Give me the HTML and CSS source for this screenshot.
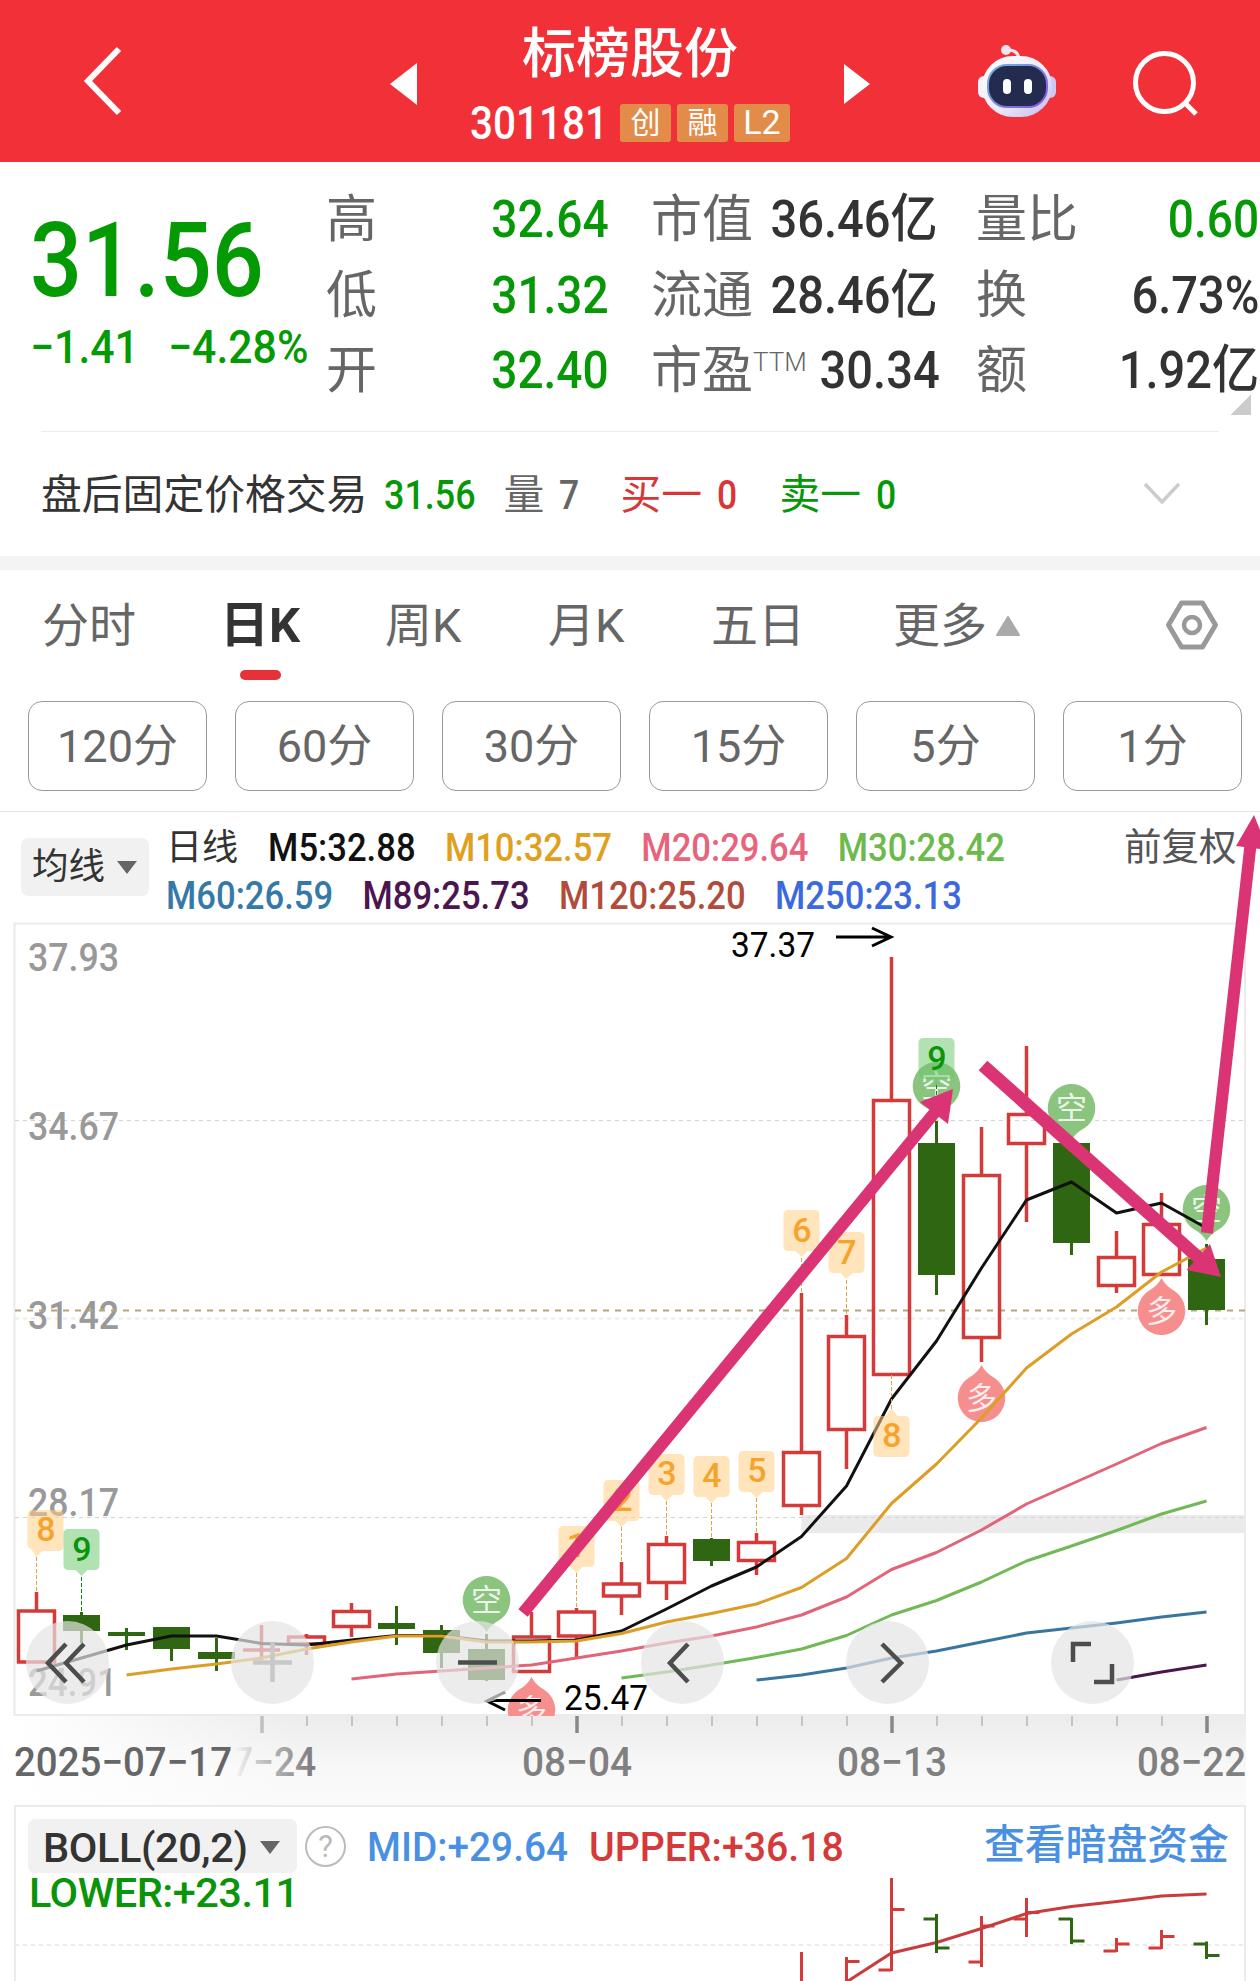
FILE: index.html
```html
<!DOCTYPE html>
<html lang="zh-CN">
<head>
  <meta charset="UTF-8">
  <meta name="viewport" content="width=device-width, initial-scale=1">
  <title>标榜股份 301181</title>
  <link rel="stylesheet" href="styles.css">
</head>
<body>

<div class="header">
  <svg class="back" width="42" height="72" viewBox="0 0 42 72"><path d="M36 3 L5 35 L36 67" fill="none" stroke="#fff" stroke-width="6"/></svg>
  <svg class="prev" width="27" height="42" viewBox="0 0 27 42"><path d="M27 0 V42 L0 21Z" fill="#fff"/></svg>
  <div class="stock">
    <h1>标榜股份</h1>
    <div class="code">
      <span class="num">301181</span>
      <span class="badge">创</span>
      <span class="badge">融</span>
      <span class="badge l2">L2</span>
    </div>
  </div>
  <svg class="next" width="26" height="40" viewBox="0 0 26 40"><path d="M0 0 V40 L26 20Z" fill="#fff"/></svg>
  <svg class="robot" width="78" height="74" viewBox="0 0 78 74">
    <defs>
      <linearGradient id="shell" x1="0" y1="0" x2="1" y2="1">
        <stop offset="0" stop-color="#fff"/>
        <stop offset=".55" stop-color="#eeeafa"/>
        <stop offset="1" stop-color="#bfb9ea"/>
      </linearGradient>
      <linearGradient id="rim" x1="0" y1="0" x2="1" y2="1">
        <stop offset="0" stop-color="#6fb7dd"/>
        <stop offset="1" stop-color="#8a4fe0"/>
      </linearGradient>
    </defs>
    <path d="M28 5 Q40 4 41 14" fill="none" stroke="#ece4f6" stroke-width="3"/>
    <circle cx="28" cy="5" r="5" fill="#f3e6f4"/>
    <rect x="0" y="31" width="12" height="22" rx="6" fill="#f4f2fc"/>
    <rect x="66" y="31" width="12" height="22" rx="6" fill="#cdc8f0"/>
    <rect x="4" y="11" width="70" height="61" rx="31" fill="url(#shell)"/>
    <rect x="10" y="20" width="59" height="42" rx="19" fill="#232b4e" stroke="url(#rim)" stroke-width="2"/>
    <rect x="25" y="34" width="8" height="15" rx="4" fill="#fff"/>
    <rect x="46" y="34" width="8" height="15" rx="4" fill="#fff"/>
  </svg>
  <svg class="search" width="66" height="66" viewBox="0 0 66 66"><circle cx="31.500" cy="31.500" r="29" fill="none" stroke="#fff" stroke-width="5"/><path d="M51 51 L63 63" stroke="#fff" stroke-width="5"/></svg>
</div>

<div class="quote">
  <div class="price">
    <div class="num last">31.56</div>
    <div class="change"><span class="num">−1.41</span><span class="num">−4.28%</span></div>
  </div>
  <div class="pairs day">
    <div class="pair"><span>高</span><b class="num green">32.64</b></div>
    <div class="pair"><span>低</span><b class="num green">31.32</b></div>
    <div class="pair"><span>开</span><b class="num green">32.40</b></div>
  </div>
  <div class="pairs cap">
    <div class="pair"><span>市值</span><b class="num">36.46亿</b></div>
    <div class="pair"><span>流通</span><b class="num">28.46亿</b></div>
    <div class="pair"><span>市盈<sup>TTM</sup></span><b class="num">30.34</b></div>
  </div>
  <div class="pairs vol">
    <div class="pair"><span>量比</span><b class="num green">0.60</b></div>
    <div class="pair"><span>换</span><b class="num">6.73%</b></div>
    <div class="pair"><span>额</span><b class="num">1.92亿</b></div>
  </div>
  <i class="corner"></i>
</div>

<div class="after">
  <span>盘后固定价格交易</span>
  <b class="num green after-price">31.56</b>
  <span class="gray after-vol">量 <b class="num">7</b></span>
  <span class="red after-buy">买一 <b class="num">0</b></span>
  <span class="green after-sell">卖一 <b class="num">0</b></span>
  <svg width="38" height="24" viewBox="0 0 38 24"><path d="M2 2 L19 20 L36 2" fill="none" stroke="#ccc" stroke-width="3.500"/></svg>
</div>

<div class="tabs">
  <span class="tab">分时</span>
  <span class="tab active">日K</span>
  <span class="tab">周K</span>
  <span class="tab">月K</span>
  <span class="tab">五日</span>
  <span class="tab more">更多<svg width="24" height="20" viewBox="0 0 24 20"><path d="M12 1 L23 19 H1Z" fill="#aaa" stroke="#aaa" stroke-width="2" stroke-linejoin="round"/></svg></span>
  <svg class="setting" width="52" height="50" viewBox="0 0 52 50"><path d="M15.500 3 H36.500 L49.500 25 L36.500 47 H15.500 L2.500 25Z" fill="none" stroke="#999" stroke-width="5" stroke-linejoin="round"/><circle cx="26" cy="25" r="8" fill="none" stroke="#999" stroke-width="4.500"/></svg>
</div>

<div class="minutes">
  <button>120分</button>
  <button>60分</button>
  <button>30分</button>
  <button>15分</button>
  <button>5分</button>
  <button>1分</button>
</div>

<div class="legend">
  <div class="select">均线<i class="caret"></i></div>
  <div class="ma">
    <div class="ma-row">
      <span class="ma-name">日线</span>
      <span class="m5">M5:32.88</span>
      <span class="m10">M10:32.57</span>
      <span class="m20">M20:29.64</span>
      <span class="m30">M30:28.42</span>
    </div>
    <div class="ma-row">
      <span class="m60">M60:26.59</span>
      <span class="m89">M89:25.73</span>
      <span class="m120">M120:25.20</span>
      <span class="m250">M250:23.13</span>
    </div>
  </div>
  <div class="adjust">前复权</div>
</div>

<div class="chart">
  <svg class="kline" width="1260" height="794" viewBox="0 922 1260 794">
    <defs>
      <clipPath id="plot"><rect x="14" y="922" width="1232" height="794"/></clipPath>
      <path id="tag" d="M-13 0 H13 Q18 0 18 5 V36 Q18 41 13 41 H6 L0 47 L-6 41 H-13 Q-18 41 -18 36 V5 Q-18 0 -13 0Z"/>
      <path id="tag-up" d="M-13 7 H-6 L0 0 L6 7 H13 Q18 7 18 12 V43 Q18 48 13 48 H-13 Q-18 48 -18 43 V12 Q-18 7 -13 7Z"/>
      <path id="pin" d="M0 -24 A24 24 0 0 1 13 20 Q4 25 0 32 Q-4 25 -13 20 A24 24 0 0 1 0 -24Z"/>
      <path id="pin-up" d="M0 24 A24 24 0 0 0 13 -20 Q4 -25 0 -33 Q-4 -25 -13 -20 A24 24 0 0 0 0 24Z"/>
    </defs>

    <!-- frame and grid -->
    <rect x="801.500" y="1515" width="444" height="18" fill="#eaeaea"/>
    <rect x="14.500" y="923.500" width="1230.500" height="791.500" fill="none" stroke="#ebebeb" stroke-width="2"/>
    <g class="grid">
      <path d="M15 1120.500 H1245"/>
      <path class="soft" d="M15 1318.500 H1245"/>
      <path d="M15 1517.500 H1245"/>
    </g>
    <g class="scale">
      <text x="28" y="971" textLength="91" lengthAdjust="spacingAndGlyphs">37.93</text>
      <text x="28" y="1140" textLength="91" lengthAdjust="spacingAndGlyphs">34.67</text>
      <text x="28" y="1329" textLength="91" lengthAdjust="spacingAndGlyphs">31.42</text>
      <text x="28" y="1516" textLength="91" lengthAdjust="spacingAndGlyphs">28.17</text>
      <text x="28" y="1696" textLength="89" lengthAdjust="spacingAndGlyphs">24.91</text>
    </g>
    <path d="M15 1310.500 H1245" stroke="#b5a57b" stroke-width="2" stroke-dasharray="6 6"/>

    <!-- candles -->
    <g class="up">
      <path d="M36.500 1592 V1611 M18.500 1611 h36 v51 h-36Z"/>
      <path d="M261.500 1625 V1660 M243 1650 h37"/>
      <path d="M306.500 1634 V1637 M306.500 1644 V1655 M288.500 1637 h36 v7 h-36Z"/>
      <path d="M351.500 1603 V1611 M351.500 1627 V1637 M333.500 1611.500 h36 v15 h-36Z"/>
      <path d="M531.500 1612 V1637 M513.500 1637 h36 v34.500 h-36Z"/>
      <path d="M576.500 1608 V1612 M576.500 1636 V1658 M558.500 1612 h36 v24 h-36Z"/>
      <path d="M621.500 1562 V1584 M621.500 1596 V1615 M603.500 1584 h36 v12 h-36Z"/>
      <path d="M666.500 1536 V1545 M666.500 1583 V1600 M648.500 1544.500 h36 v38 h-36Z"/>
      <path d="M756.500 1533 V1543 M756.500 1561 V1575 M738.500 1542.500 h36 v18 h-36Z"/>
      <path d="M801.500 1293 V1452 M801.500 1506 V1515 M783.500 1452.500 h36 v53 h-36Z"/>
      <path d="M846.500 1315 V1336 M846.500 1430 V1469 M828.500 1336.500 h36 v93 h-36Z"/>
      <path d="M891.500 957 V1100 M873.500 1100.500 h36 v274 h-36Z"/>
      <path d="M981.500 1127 V1175 M981.500 1338 V1362 M963.500 1175.500 h36 v162 h-36Z"/>
      <path d="M1026.500 1046 V1114 M1026.500 1144 V1222 M1008.500 1114.500 h36 v29 h-36Z"/>
      <path d="M1116.500 1231 V1257 M1116.500 1286 V1293 M1098.500 1257.500 h36 v28 h-36Z"/>
      <path d="M1161.500 1193 V1224 M1143.500 1224.500 h36 v50 h-36Z"/>
    </g>
    <g class="down">
      <path d="M81.500 1612 V1643"/><rect x="63" y="1615" width="37" height="16"/>
      <path d="M126.500 1628 V1650"/><rect x="108" y="1632" width="37" height="4"/>
      <path d="M171.500 1630 V1661"/><rect x="153" y="1627" width="37" height="22"/>
      <path d="M216.500 1638 V1671"/><rect x="198" y="1652" width="37" height="7"/>
      <path d="M396.500 1606 V1645"/><rect x="378" y="1623" width="37" height="6"/>
      <path d="M441.500 1625 V1668"/><rect x="423" y="1630" width="37" height="23"/>
      <path d="M486.500 1634 V1681"/><rect x="468" y="1649" width="37" height="31"/>
      <path d="M711.500 1538 V1566"/><rect x="693" y="1539" width="37" height="22"/>
      <path d="M936.500 1121 V1295"/><rect x="918" y="1143" width="37" height="132"/>
      <path d="M1071.500 1143 V1255"/><rect x="1053" y="1143" width="37" height="100"/>
      <path d="M1206.500 1244 V1325"/><rect x="1188" y="1259" width="37" height="51"/>
    </g>

    <!-- long / short signals -->
    <g class="pin-short">
      <use href="#pin" x="486.500" y="1600"/><text x="486.500" y="1611">空</text>
      <use href="#pin" x="936.500" y="1086"/><text x="936.500" y="1097">空</text>
      <use href="#pin" x="1071.500" y="1108"/><text x="1071.500" y="1119">空</text>
      <use href="#pin" x="1206.500" y="1209"/><text x="1206.500" y="1220">空</text>
    </g>
    <g class="pin-long" clip-path="url(#plot)">
      <use href="#pin-up" x="531.500" y="1710"/><text x="531.500" y="1721">多</text>
      <use href="#pin-up" x="981.500" y="1398"/><text x="981.500" y="1409">多</text>
      <use href="#pin-up" x="1161.500" y="1311"/><text x="1161.500" y="1322">多</text>
    </g>

    <!-- moving averages -->
    <g class="lines">
      <polyline stroke="#111" points="36.500,1671 81.500,1658 126.500,1645 171.500,1636 216.500,1636 261.500,1643.500 306.500,1645 351.500,1640 396.500,1635.500 441.500,1635.500 486.500,1641 531.500,1641 576.500,1640 621.500,1631 666.500,1609 711.500,1586 756.500,1567 801.500,1536.500 846.500,1486 891.500,1399 936.500,1341 981.500,1268 1026.500,1200 1071.500,1182 1116.500,1213 1161.500,1203 1206.500,1228"/>
      <polyline stroke="#dc9e26" points="126.500,1675 171.500,1669 216.500,1664 261.500,1658 306.500,1649 351.500,1642 396.500,1636 441.500,1636 486.500,1642 531.500,1642 576.500,1641 621.500,1633.500 666.500,1622 711.500,1613.500 756.500,1604 801.500,1587.500 846.500,1558.500 891.500,1503.500 936.500,1464 981.500,1418 1026.500,1368 1071.500,1334 1116.500,1307 1161.500,1272 1206.500,1248"/>
      <polyline stroke="#e26478" points="351.500,1679 396.500,1674 441.500,1671 486.500,1668 531.500,1665 576.500,1658 621.500,1651 666.500,1643 711.500,1636 756.500,1627 801.500,1615 846.500,1597 891.500,1569.500 936.500,1552.500 981.500,1530 1026.500,1504 1071.500,1484 1116.500,1464 1161.500,1443.500 1206.500,1427.500"/>
      <polyline stroke="#72b856" points="621.500,1678 666.500,1672 711.500,1665 756.500,1657.500 801.500,1649 846.500,1635.500 891.500,1615 936.500,1600.500 981.500,1582 1026.500,1561 1071.500,1546 1116.500,1530.500 1161.500,1514 1206.500,1501"/>
      <polyline stroke="#3a75a0" points="756.500,1680 801.500,1675 846.500,1668 891.500,1658 936.500,1651 981.500,1642 1026.500,1633 1071.500,1628 1116.500,1623 1161.500,1617 1206.500,1612"/>
      <polyline stroke="#4b1550" points="1116.500,1680 1161.500,1672 1206.500,1665"/>
    </g>

    <!-- nine-turn counters -->
    <g class="tag-links">
      <path d="M36.500 1557 V1592 M576.500 1573 V1608 M621.500 1527 V1562 M666.500 1501 V1536 M711.500 1503 V1538 M756.500 1498 V1533 M801.500 1258 V1293 M846.500 1280 V1315 M891.500 1375 V1409" stroke="#d9a83e"/>
      <path d="M81.500 1577 V1612 M936.500 1085 V1121" stroke="#14801c"/>
    </g>
    <g class="tag-orange">
      <path d="M32.500 1510 H58.500 Q63.500 1510 63.500 1515 V1546 Q63.500 1551 58.500 1551 H42 L36.500 1557 L31 1549 Q27.500 1548 27.500 1544 V1515 Q27.500 1510 32.500 1510Z"/><text x="46" y="1541">8</text>
      <use href="#tag" x="576.500" y="1526"/><text x="576.500" y="1557">1</text>
      <use href="#tag" x="621.500" y="1480"/><text x="623" y="1511">2</text>
      <use href="#tag" x="666.500" y="1454"/><text x="667" y="1485">3</text>
      <use href="#tag" x="711.500" y="1456"/><text x="712" y="1487">4</text>
      <use href="#tag" x="756.500" y="1451"/><text x="757" y="1482">5</text>
      <use href="#tag" x="801.500" y="1210"/><text x="802" y="1242">6</text>
      <use href="#tag" x="846.500" y="1232"/><text x="847" y="1264">7</text>
      <use href="#tag-up" x="891.500" y="1409"/><text x="892" y="1447">8</text>
    </g>
    <g class="tag-green">
      <use href="#tag" x="81.500" y="1529"/><text x="82" y="1561">9</text>
      <use href="#tag" x="936.500" y="1038"/><text x="937" y="1070">9</text>
    </g>

    <!-- highest and lowest price -->
    <g class="extreme">
      <text x="731" y="957" textLength="84" lengthAdjust="spacingAndGlyphs">37.37</text>
      <path d="M836 937 H890 M872 928 L891 937 L872 946"/>
      <text x="564" y="1710" textLength="84" lengthAdjust="spacingAndGlyphs">25.47</text>
      <path d="M541 1700.500 H488 M505 1692 L487 1701 L505 1710"/>
    </g>
  </svg>

  <div class="tools">
    <button><svg width="83" height="83" viewBox="0 0 83 83"><path d="M40 23 L22 42 L40 61 M58 23 L40 42 L58 61"/></svg></button>
    <button class="disabled"><svg width="83" height="83" viewBox="0 0 83 83"><path d="M22 41.500 H61 M41.500 22 V61"/></svg></button>
    <button><svg width="83" height="83" viewBox="0 0 83 83"><path d="M22 41.500 H61"/></svg></button>
    <button><svg width="83" height="83" viewBox="0 0 83 83"><path d="M47 23 L29 42 L47 61"/></svg></button>
    <button><svg width="83" height="83" viewBox="0 0 83 83"><path d="M36 23 L55 42 L36 61"/></svg></button>
    <button><svg width="83" height="83" viewBox="0 0 83 83"><path d="M40 23 H22 V41 M61 43 V61 H43"/></svg></button>
  </div>

  <!-- hand drawn trend arrows -->
  <svg class="trend" width="1260" height="794" viewBox="0 922 1260 794">
    <path d="M523 1613 L936 1111" stroke-width="12"/>
    <path class="head" d="M953 1089 L920 1102 L948 1124Z"/>
    <path d="M983 1065.500 L1200 1259" stroke-width="13"/>
    <path class="head" d="M1221 1277 L1186.500 1270 L1210 1244Z"/>
    <path d="M1207 1233 L1250.500 845" stroke-width="12"/>
    <path class="head" d="M1254 815 L1236 846 L1268 850Z"/>
  </svg>
</div>

<div class="axis">
  <svg width="1260" height="89" viewBox="0 1716 1260 89">
    <defs>
      <linearGradient id="fade" x1="230" x2="315" y1="0" y2="0" gradientUnits="userSpaceOnUse">
        <stop offset="0" stop-color="#fff"/>
        <stop offset=".3" stop-color="#ccc"/>
        <stop offset="1" stop-color="#7a7a7a"/>
      </linearGradient>
    </defs>
    <path stroke="#c4c4c4" stroke-width="2" d="M307 1716 v10 M352 1716 v10 M397 1716 v10 M442 1716 v10 M487 1716 v10 M532 1716 v10 M622 1716 v10 M667 1716 v10 M712 1716 v10 M757 1716 v10 M802 1716 v10 M847 1716 v10 M937 1716 v10 M982 1716 v10 M1027 1716 v10 M1072 1716 v10 M1117 1716 v10 M1162 1716 v10"/>
    <path stroke="#c0c0c0" stroke-width="3.500" d="M262 1716 v17"/>
    <path stroke="#888" stroke-width="3.500" d="M577 1716 v17 M892 1716 v17 M1207 1716 v17"/>
    <g class="dates">
      <text x="14" y="1775.500" textLength="218" lengthAdjust="spacingAndGlyphs" fill="#666">2025−07−17</text>
      <text x="232" y="1775.500" textLength="84" lengthAdjust="spacingAndGlyphs" fill="url(#fade)">7−24</text>
      <text x="522" y="1775.500" textLength="110" lengthAdjust="spacingAndGlyphs">08−04</text>
      <text x="837" y="1775.500" textLength="110" lengthAdjust="spacingAndGlyphs">08−13</text>
      <text x="1137" y="1775.500" textLength="109" lengthAdjust="spacingAndGlyphs">08−22</text>
    </g>
  </svg>
</div>

<div class="boll">
  <div class="boll-head">
    <div class="select">BOLL(20,2)<i class="caret"></i></div>
    <span class="help">?</span>
    <span class="mid"><span class="num">MID:+29.64</span></span>
    <span class="upper"><span class="num">UPPER:+36.18</span></span>
    <span class="link">查看暗盘资金</span>
  </div>
  <div class="lower">LOWER:+23.11</div>
  <svg class="boll-chart" width="1232" height="175" viewBox="14 1806 1232 175">
    <path d="M15 1945 H1245" stroke="#ebebeb" stroke-width="2" stroke-dasharray="4 4"/>
    <g fill="none" stroke="#d53a3a" stroke-width="3">
      <path d="M801.500 1952 V1981"/>
      <path d="M846.500 1957 V1981 M846.500 1961.500 h13"/>
      <path d="M891.500 1878 V1971 M891.500 1909.500 h13 M891.500 1970 h-13"/>
      <path d="M981.500 1916 V1967 M981.500 1926 h13 M981.500 1962 h-13"/>
      <path d="M1026.500 1898 V1937 M1026.500 1912.500 h13 M1026.500 1919 h-13"/>
      <path d="M1116.500 1938 V1952 M1116.500 1944 h13 M1116.500 1951 h-13"/>
      <path d="M1161.500 1930 V1949 M1161.500 1936.500 h13 M1161.500 1948 h-13"/>
      <polyline stroke="#c93c3c" points="846.500,1982 891.500,1953 936.500,1942.500 981.500,1928.500 1026.500,1913.500 1071.500,1906.500 1116.500,1901.500 1161.500,1896 1206.500,1894"/>
    </g>
    <g fill="none" stroke="#2f6611" stroke-width="3">
      <path d="M936.500 1914 V1953 M936.500 1919 h-13 M936.500 1948 h13"/>
      <path d="M1071.500 1918 V1944 M1071.500 1919 h-13 M1071.500 1941 h13"/>
      <path d="M1206.500 1941.500 V1959 M1206.500 1944 h-13 M1206.500 1955.500 h13"/>
    </g>
  </svg>
</div>

</body>
</html>
```
FILE: styles.css
```css
* { margin: 0; padding: 0; box-sizing: border-box; }
body { width: 1260px; height: 1981px; overflow: hidden; background: #fff; color: #333; font-family: Roboto, 'Noto Sans CJK SC', sans-serif; }
svg { display: block; flex: none; }
i { display: block; }

/* narrow figures */
.num { display: inline-block; font-weight: 500; transform: scaleX(.9); transform-origin: left; }
.green { color: #069806; }
.red { color: #d93636; }
.gray { color: #666; }

/* Header */
.header { height: 162px; background: #f13038; display: flex; align-items: flex-start; color: #fff; }
.back { margin: 46px 0 0 83px; }
.prev { margin: 63px 0 0 265px; }
.stock { width: 426px; display: flex; flex-direction: column; align-items: center; }
.stock h1 { margin-top: 18px; font-size: 54px; line-height: 74px; font-weight: 500; }
.code { display: flex; align-items: center; gap: 6px; height: 38px; margin-top: 12px; line-height: 38px; }
.code .num { width: 144px; font-size: 46px; transform: scaleX(.88); }
.badge { width: 51px; height: 38px; border-radius: 3px; background: #e38c4a; text-align: center; font-size: 30px; line-height: 37px; }
.badge.l2 { width: 56px; font-size: 34px; }
.next { margin: 64px 0 0 1px; }
.robot { margin: 45px 0 0 108px; }
.search { margin: 51px 0 0 77px; }

/* Quote */
.quote { position: relative; height: 269px; display: flex; padding-top: 20px; }
.price { width: 326px; padding-left: 30px; color: #049a04; }
.last { display: block; font-size: 103px; line-height: 120px; margin-top: 19px; transform: scaleX(.89); }
.change { display: flex; font-size: 46px; line-height: 54px; margin-top: -1px; gap: 21px; white-space: nowrap; }
.change .num { transform: scaleX(.93); }
.pairs { width: 283px; }
.pair { display: flex; justify-content: space-between; height: 75.5px; line-height: 75.5px; font-size: 51px; color: #666; white-space: nowrap; }
.pair b { font-size: 52px; transform: scaleX(.905); transform-origin: right; color: #333; }
.pair b.green { color: #069806; transform: scaleX(.885); }
.pair sup { font-size: 26px; font-weight: 300; line-height: 1; vertical-align: 17px; }
.cap { margin-left: 42px; width: 279px; }
.vol { margin-left: 46px; }
.corner { position: absolute; right: 9px; bottom: 16px; width: 20px; height: 20px; background: linear-gradient(135deg, transparent 50%, #ccc 50%); }

.after { margin: 0 41px; height: 125px; border-top: 1px solid #ebebeb; display: flex; align-items: baseline; font-size: 40.8px; line-height: 127px; white-space: nowrap; }
.after .num { margin-left: 5px; transform: scaleX(.87); }
.after .after-price { margin-left: 17px; width: 119px; transform: scaleX(.88); }
.after-vol { width: 117px; }
.after-buy { width: 159px; }
.after-sell { width: 364px; }
.after svg { align-self: center; }

/* Period tabs */
.tabs { height: 145px; border-top: 14px solid #f4f4f4; padding: 0 42px; display: flex; color: #666; font-size: 47px; line-height: 112px; white-space: nowrap; }
.tab { width: 163px; }
.tab:first-child { width: 178px; }
.tab.active { position: relative; width: 165px; color: #333; font-size: 49px; font-weight: 700; }
.tab.active::after { content: ''; position: absolute; left: 20px; top: 100px; width: 41px; height: 10px; border-radius: 5px; background: #e63236; }
.tab.more { width: 273px; margin-left: 19px; display: flex; align-items: center; height: 112px; gap: 9px; }
.setting { margin-top: 30px; }

.minutes { height: 111px; padding-left: 28px; display: flex; gap: 28px; border-bottom: 1px solid #e6e6e6; }
.minutes button { width: 179px; height: 90px; padding-top: 2px; border: 1.5px solid #999; border-radius: 14px; background: #fff; font: 45px/84px Roboto, 'Noto Sans CJK SC', sans-serif; color: #666; }

/* Moving average legend */
.legend { height: 110px; display: flex; padding-left: 21px; white-space: nowrap; }
.select { display: flex; align-items: center; border-radius: 7px; background: #f1f1f1; }
.caret { border: solid transparent; border-width: 13px 10px 0; border-top-color: #666; }
.legend .select { margin-top: 26px; width: 128px; height: 58px; padding-left: 11px; gap: 12px; font-size: 36.500px; line-height: 54px; }
.ma { margin-left: 17px; padding-top: 12px; width: 958px; }
.ma-row { display: flex; gap: 33px; height: 48px; line-height: 48px; font-size: 39px; font-weight: 500; transform: scaleX(.888); transform-origin: left; }
.ma-name { width: 82px; font-size: 36px; font-weight: 400; transform: scaleX(1.13); transform-origin: left; }
.m5 { color: #111; }
.m10 { color: #e0a01e; }
.m20 { color: #e8637c; }
.m30 { color: #6cba4c; }
.m60 { color: #3579a8; }
.m89 { color: #4b1550; }
.m120 { color: #b04c3c; }
.m250 { color: #3d69e0; }
.adjust { padding-top: 11px; font-size: 37.500px; line-height: 48px; color: #555; }

/* K line chart */
.chart { position: relative; height: 794px; }
.grid path { stroke: #d4d4d4; stroke-width: 1; stroke-dasharray: 4 4; }
.grid .soft { stroke: #ececec; stroke-width: 2; }
.scale { font: 500 39px Roboto; fill: #999; }
.up { fill: none; stroke: #d53a3a; stroke-width: 3.5; }
.down { fill: #2f6611; stroke: none; }
.down path { stroke: #2f6611; stroke-width: 3; }
.pin-short { fill: #8bc47f; }
.pin-long { fill: #f68e8e; }
.pin-short text, .pin-long text { fill: #fff; fill-opacity: .85; font: 31px 'Noto Sans CJK SC'; text-anchor: middle; }
.lines { fill: none; stroke-width: 3; stroke-linejoin: round; }
.tag-links { fill: none; stroke-width: 1; stroke-dasharray: 4 2; }
.tag-orange, .tag-green { font: 500 34px Roboto; text-anchor: middle; }
.tag-orange { fill: rgba(255, 205, 133, .55); }
.tag-orange text { fill: #f6a32c; }
.tag-green { fill: rgba(110, 198, 110, .53); }
.tag-green text { fill: #0a940a; }
.extreme { font: 35px Roboto; fill: #000; }
.extreme path { fill: none; stroke: #000; stroke-width: 3; }

.tools { position: absolute; left: 26px; top: 699px; display: flex; gap: 122px; }
.tools button { width: 83px; height: 83px; border: none; border-radius: 50%; background: rgba(228, 228, 228, .7); }
.tools path { fill: none; stroke: #4d4d4d; stroke-width: 4.500; }
.tools .disabled path { stroke: #c8c8c8; }

.trend { position: absolute; left: 0; top: 0; overflow: visible; fill: none; stroke: #da3474; pointer-events: none; }
.trend .head { fill: #da3474; stroke: none; }

.axis { height: 89px; background: linear-gradient(90deg, #fff 14px, rgba(255, 255, 255, 0) 300px), linear-gradient(#ececec, #f8f8f8 60%, #fafafa); border-right: 14px solid #fff; }
.dates { font: 500 40.500px Roboto; fill: #808080; }

/* BOLL panel */
.boll { position: relative; margin: 0 14px; height: 176px; border: 2px solid #ebebeb; border-bottom: none; overflow: hidden; }
.boll-head { display: flex; align-items: center; padding: 12px 0 0 12px; height: 66px; font-size: 41.500px; white-space: nowrap; }
.boll-head .select { width: 269px; height: 54px; padding: 2px 17px 0 15px; justify-content: space-between; font-weight: 500; letter-spacing: -.4px; }
.boll-head .num { padding-top: 1px; transform: scaleX(.935); }
.boll-head .upper .num { transform: scaleX(.945); }
.help { width: 41px; height: 41px; margin: 0 21px 0 8px; border: 2.500px solid #bbb; border-radius: 50%; color: #bbb; font-size: 31px; line-height: 37px; text-align: center; }
.mid { width: 222px; color: #4a90e2; }
.upper { width: 395px; color: #d53a3a; }
.link { color: #4a90e2; font-size: 40.800px; font-weight: 500; line-height: 50px; margin-top: -3px; }
.lower { margin-top: -4px; padding-left: 13px; font-size: 41.500px; font-weight: 500; line-height: 48px; letter-spacing: -.5px; color: #0a940a; }
.boll-chart { position: absolute; left: -2px; top: -1px; }
```
